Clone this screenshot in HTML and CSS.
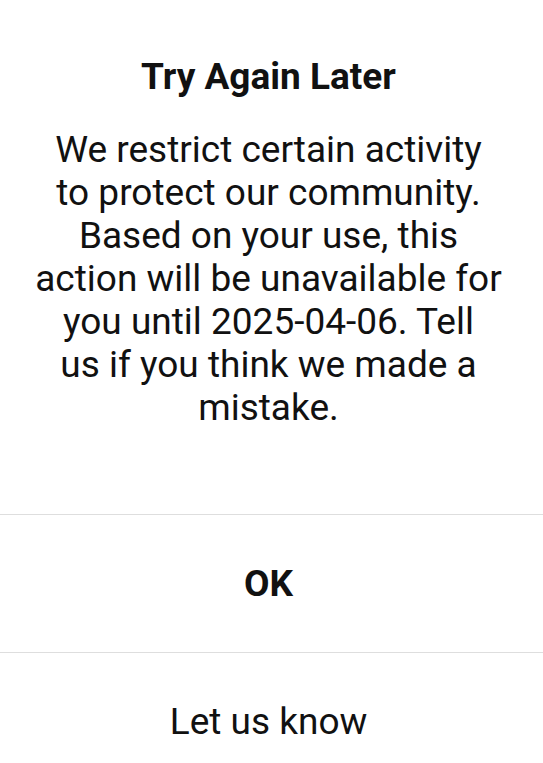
FILE: index.html
```html
<!DOCTYPE html>
<html>
<head>
<meta charset="utf-8">
<link rel="stylesheet" href="styles.css">
</head>
<body>
<div class="dialog">
  <div class="content">
    <h1 class="title">Try Again Later</h1>
    <p class="message">We restrict certain activity to protect our community. Based on your use, this action will be unavailable for you until 2025-04-06. Tell<br>us if you think we made a mistake.</p>
  </div>
  <div class="actions">
    <button class="action primary">OK</button>
    <button class="action">Let us know</button>
  </div>
</div>
</body>
</html>
```
FILE: styles.css
```css
html, body {
  margin: 0;
  padding: 0;
  background: #ffffff;
}
body {
  font-family: Roboto, "Liberation Sans", sans-serif;
  color: #111111;
}
.dialog {
  display: flex;
  flex-direction: column;
}
.content {
  padding: 57px 41px 85px 35px;
  text-align: center;
}
.title {
  margin: 0;
  font-size: 37px;
  line-height: 40px;
  font-weight: 700;
}
.message {
  margin: 31px 0 0;
  font-size: 37px;
  line-height: 43px;
  font-weight: 400;
}
.actions {
  display: flex;
  flex-direction: column;
}
.action {
  border: 0;
  border-top: 1px solid #dedede;
  background: #fff;
  height: 138px;
  font-family: inherit;
  font-size: 37px;
  color: #111111;
  padding: 0 6px 0 0;
}
.action.primary {
  font-weight: 700;
}
```
